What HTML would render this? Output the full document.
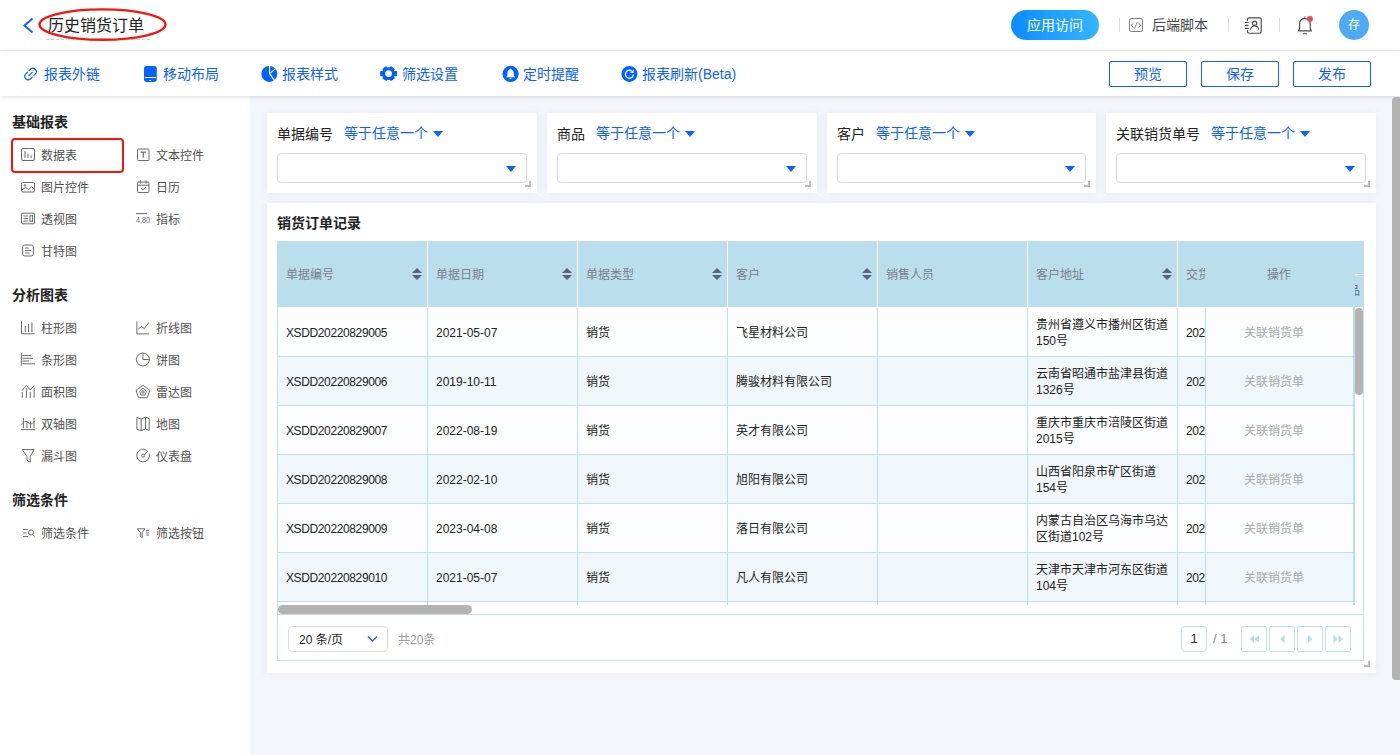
<!DOCTYPE html>
<html lang="zh-CN">
<head>
<meta charset="utf-8">
<title>历史销货订单</title>
<style>
*{box-sizing:border-box;margin:0;padding:0}
html,body{width:1400px;height:755px;overflow:hidden}
body{font-family:"Liberation Sans","Noto Sans CJK SC",sans-serif;font-size:13px;color:#333;background:#f5f6fa;position:relative}
.abs{position:absolute}
/* header */
#hdr{position:absolute;left:0;top:0;width:1400px;height:51px;background:#fff;border-bottom:1px solid #ebebeb}
#title{position:absolute;left:48px;top:15px;font-size:16px;line-height:22px;color:#222;white-space:nowrap}
#dash{position:absolute;left:46px;top:39px;width:104px;border-top:1px dashed #d0d0d0}
#pill{position:absolute;left:1011px;top:10px;width:88px;height:30px;border-radius:15px;background:linear-gradient(90deg,#0d8cff,#34b6ff);color:#fff;font-size:14px;line-height:30px;text-align:center}
.vsep{position:absolute;top:18px;width:1px;height:14px;background:#ddd}
#script{position:absolute;left:1152px;top:14px;font-size:14px;line-height:22px;color:#444}
#avatar{position:absolute;left:1339px;top:10px;width:30px;height:30px;border-radius:50%;background:#4eabf3;color:#fff;font-size:12px;line-height:30px;text-align:center}
/* toolbar */
#tb{z-index:5;position:absolute;left:0;top:51px;width:1400px;height:45px;background:#fff;box-shadow:0 1px 5px rgba(0,0,0,.13)}
.ti{position:absolute;top:12px;font-size:14px;line-height:22px;color:#0b62ff;white-space:nowrap}
.ti svg{position:absolute;top:3px}
.btn{position:absolute;top:10px;width:78px;height:26px;border:1px solid #0b62ff;border-radius:2px;color:#0b62ff;font-size:14px;line-height:24px;text-align:center;background:#fff}
/* sidebar */
#side{position:absolute;left:0;top:96px;width:250px;height:659px;background:#fff;border-top:1px solid #fff}
.sh{position:absolute;left:12px;font-size:14px;font-weight:bold;color:#222;line-height:20px}
.si{position:absolute;font-size:12px;line-height:18px;color:#505050;white-space:nowrap}
.si svg{position:absolute;left:-20px;top:2px}
#selbox{position:absolute;left:11px;top:41px;width:113px;height:35px;border:2px solid #f5150f;border-radius:4px}
/* filter cards */
.fc{position:absolute;top:113px;height:80px;background:#fff;box-shadow:0 0 8px rgba(110,110,190,.10)}
.fl{position:absolute;left:10px;top:11px;font-size:14px;line-height:20px;color:#222;white-space:nowrap}
.fl b{font-weight:normal;color:#0b62ff;margin-left:11px;position:relative;top:-1px}
.fi{position:absolute;left:10px;top:40px;height:30px;border:1px solid #d9d9d9;border-radius:4px;background:#fff}
.caret{position:absolute;width:0;height:0;border-left:5px solid transparent;border-right:5px solid transparent;border-top:6px solid #0b62ff}
.rz{position:absolute;width:6px;height:6px;border-right:2px solid #bbb;border-bottom:2px solid #bbb}
/* table card */
#card{position:absolute;left:267px;top:203px;width:1109px;height:470px;background:#fff;box-shadow:0 0 8px rgba(110,110,190,.10)}
#ctitle{position:absolute;left:10px;top:10px;font-size:14px;font-weight:bold;color:#222;line-height:20px}

/* table */
#tbl{position:absolute;left:10px;top:38px;width:1087px;height:420px;border:1px solid #c3dfeb;border-top:none;overflow:hidden;font-size:12px;background:#fbfdfe}
#th{position:absolute;left:0;top:0;width:1087px;height:66px;background:#badeeb}
.hc{position:absolute;top:0;height:66px;border-right:1px solid #fff;color:#7b808c;line-height:68px;padding-left:8px;white-space:nowrap;overflow:hidden}
.sort{position:absolute;right:5px;top:27px;width:10px;height:12px}
.sort:before,.sort:after{content:"";position:absolute;left:0;border-left:5px solid transparent;border-right:5px solid transparent}
.sort:before{top:0;border-bottom:5px solid #5a6379}
.sort:after{bottom:0;border-top:5px solid #5a6379}
.row{position:absolute;left:0;width:1077px;height:49px;border-bottom:1px solid #c3dfeb;background:#fbfdfe}
.row.e{background:#f0f7fb}
.c{position:absolute;top:0;height:49px;border-right:1px solid #c3dfeb;padding-left:8px;color:#222;white-space:nowrap;overflow:hidden;display:flex;align-items:center;line-height:16px}
.c.n{letter-spacing:-0.38px}
.op{position:absolute;left:927px;top:0;width:148px;height:48px;padding-right:11px;border-left:1px solid #c3dfeb;background:inherit;color:#aaa;text-align:center;line-height:50px}

/* pagination */
#pg{position:absolute;left:0;top:373px;width:1087px;height:47px;border-top:1px solid #c3dfeb;background:#fff;font-size:12px}
#psel{position:absolute;left:10px;top:11px;width:100px;height:26px;border:1px solid #dcdcdc;border-radius:4px;line-height:26px;padding-left:10px;color:#222}
#ptot{position:absolute;left:120px;top:12px;line-height:26px;color:#999}
#pin{position:absolute;left:903px;top:11px;width:26px;height:26px;border:1px solid #c3dfeb;border-radius:4px;line-height:24px;text-align:center;color:#333;font-size:13px}
#pof{position:absolute;left:935px;top:11px;line-height:26px;color:#888;font-size:13px}
.pb{position:absolute;top:11px;width:26px;height:26px;border:1px solid #c3dfeb;border-radius:2px}
.pb svg{position:absolute;left:0;top:0}
</style>
</head>
<body>
<div id="hdr">
  <svg class="abs" style="left:20px;top:15px" width="16" height="20" viewBox="0 0 16 20"><path d="M12.5 3.5 L4.5 10.5 L12.5 17.5" fill="none" stroke="#0b62ff" stroke-width="2"/></svg>
  <div id="title">历史销货订单</div>
  <div id="dash"></div>
  <svg class="abs" style="left:36px;top:6px" width="134" height="38" viewBox="0 0 134 38"><ellipse cx="66.5" cy="18.6" rx="63" ry="15.2" fill="none" stroke="#f5150f" stroke-width="2.4"/></svg>
  <div id="pill">应用访问</div>
  <div class="vsep" style="left:1119px"></div>
  <div id="script">后端脚本</div>
  <div class="vsep" style="left:1228px"></div>
  <div class="vsep" style="left:1279px"></div>

  <svg class="abs" style="left:1127px;top:16px" width="18" height="18" viewBox="1127 16 18 18"><rect x="1129.5" y="18.5" width="13" height="13" rx="2" fill="none" stroke="#7d7d7d" stroke-width="1"/><path d="M1133.5,23.1 L1130.9,25.3 L1133.5,27.5 M1137.3,22 L1134.5,28.5 M1138.4,23.1 L1141,25.3 L1138.4,27.5" fill="none" stroke="#7d7d7d" stroke-width="0.9"/></svg>
  <svg class="abs" style="left:1243px;top:15px" width="21" height="21" viewBox="1243 15 21 21"><g fill="none" stroke="#4a4a4a" stroke-width="1.15"><path d="M1247.5,21 V19.4 a1.6,1.6 0 0 1 1.6,-1.6 H1259.6 a1.6,1.6 0 0 1 1.6,1.6 V31.6 a1.6,1.6 0 0 1 -1.6,1.6 H1249.1 a1.6,1.6 0 0 1 -1.6,-1.6 V30"/><path d="M1245,22.5 H1248.6 M1245,25.4 H1248.6 M1245,28.4 H1248.6" stroke-width="1.1"/><circle cx="1254.6" cy="23.2" r="2.1"/><path d="M1250.6,29.7 a4,3.8 0 0 1 8,0"/></g></svg>
  <svg class="abs" style="left:1296px;top:14px" width="20" height="22" viewBox="1296 14 20 22"><g fill="none" stroke="#4a4a4a" stroke-width="1.15" stroke-linecap="round"><path d="M1298.4,30.8 H1311.4 L1310.2,29 V24 C1310.2,20.6 1308,18.6 1304.9,18.6 C1301.8,18.6 1299.6,20.6 1299.6,24 V29 Z" stroke-linejoin="round"/><path d="M1304.9,16.9 V17.2"/><path d="M1303.3,33.7 H1306.6"/></g><circle cx="1310" cy="18.9" r="2.9" fill="#e94b4b"/></svg>
  <div id="avatar">存</div>
</div>
<div id="tb">
  <svg class="abs" style="left:22px;top:14px" width="18" height="18" viewBox="22 65 18 18"><g transform="translate(30.5,74) rotate(-45)" fill="none" stroke="#0062ff" stroke-width="1.15" stroke-linecap="round"><path d="M-0.9,-3.4 H-3.3 A3.4,3.4 0 0 0 -3.3,3.4 H-0.9"/><path d="M1.4,-3.4 H3.3 A3.4,3.4 0 0 1 3.3,3.4 H1.4"/><path d="M-2.5,0 H2.7"/></g></svg>
  <svg class="abs" style="left:142px;top:14px" width="18" height="18" viewBox="142 65 18 18"><rect x="144" y="66" width="12.8" height="16" rx="2.4" fill="#0062ff"/><rect x="144.6" y="77" width="11.6" height="1" fill="#fff"/><rect x="149.2" y="80" width="2" height="1" rx="0.5" fill="#fff"/></svg>
  <svg class="abs" style="left:260px;top:14px" width="18" height="18" viewBox="260 65 18 18"><circle cx="269.3" cy="73.9" r="8" fill="#0062ff"/><path d="M269.6,65.5 V73.6 L275.6,68.6 M269.6,73.6 L274.6,80.6" fill="none" stroke="#fff" stroke-width="1.1"/></svg>
  <svg class="abs" style="left:379px;top:14px" width="20" height="18" viewBox="379 65 20 18"><g transform="translate(388.6,73.6)" fill="#0062ff"><circle r="6.3"/><rect x="-8.5" y="-2.6" width="17" height="5.2" rx="1"/><rect x="-7.5" y="-2.6" width="15" height="5.2" rx="1" transform="rotate(54)"/><rect x="-7.5" y="-2.6" width="15" height="5.2" rx="1" transform="rotate(126)"/><circle r="3.4" fill="#fff"/></g></svg>
  <svg class="abs" style="left:501px;top:14px" width="19" height="18" viewBox="501 65 19 18"><circle cx="510.6" cy="73.9" r="8.1" fill="#0062ff"/><path d="M510.5,68.4 L508.6,70.3 C507.7,71.2 507.4,72 507.4,73.2 V75.6 L506,77.3 H515 L513.7,75.6 V73.2 C513.7,72 513.4,71.2 512.4,70.3 Z" fill="#fff"/><rect x="509.5" y="78" width="2" height="0.9" fill="#fff"/></svg>
  <svg class="abs" style="left:620px;top:14px" width="19" height="18" viewBox="620 65 19 18"><circle cx="629.4" cy="73.9" r="8" fill="#0062ff"/><path d="M633.4,74.6 A4,4 0 1 1 631.6,70.9" fill="none" stroke="#fff" stroke-width="1.3"/><path d="M630.2,72.7 L633.7,69.4 V72.9 Z" fill="#fff"/></svg>
  <div class="ti" style="left:44px">报表外链</div>
  <div class="ti" style="left:163px">移动布局</div>
  <div class="ti" style="left:282px">报表样式</div>
  <div class="ti" style="left:402px">筛选设置</div>
  <div class="ti" style="left:523px">定时提醒</div>
  <div class="ti" style="left:642px">报表刷新(Beta)</div>
  <div class="btn" style="left:1109px">预览</div>
  <div class="btn" style="left:1201px">保存</div>
  <div class="btn" style="left:1293px">发布</div>
</div>

<div id="side">
  <svg class="abs" style="left:20px;top:49px" width="17" height="17" viewBox="20 146 17 17"><g fill="none" stroke="#6b6b6b" stroke-width="1"><rect x="21.5" y="148.5" width="13" height="12" rx="1.5"/><path d="M25,151.2 V158 M28,153.6 V158 M31,155.4 V158"/></g></svg>
  <svg class="abs" style="left:20px;top:83px" width="17" height="14" viewBox="20 180 17 14"><g fill="none" stroke="#6b6b6b" stroke-width="1"><rect x="21.5" y="182.5" width="13" height="9.5" rx="1.2"/><circle cx="24.8" cy="185.4" r="0.8"/><path d="M21.8,190 L25.5,187.6 L28.6,189.6 L31.6,186.6 L34.4,189"/></g></svg>
  <svg class="abs" style="left:20px;top:114px" width="17" height="15" viewBox="20 211 17 15"><g fill="none" stroke="#6b6b6b" stroke-width="1"><rect x="21.5" y="213.2" width="13" height="10.6" rx="0.6"/><path d="M23.6,216 H28.2 M23.6,218.5 H28.2 M23.6,221 H28.2"/><rect x="30" y="215.8" width="2.6" height="5.4"/></g></svg>
  <svg class="abs" style="left:20px;top:146px" width="17" height="15" viewBox="20 243 17 15"><g fill="none" stroke="#6b6b6b" stroke-width="1"><rect x="22.6" y="245" width="10.8" height="11" rx="2.2"/><path d="M25.2,248 H28.6 M25.2,250.5 H31 M25.2,253 H29.6"/></g></svg>
  <svg class="abs" style="left:135px;top:49px" width="17" height="17" viewBox="135 146 17 17"><g fill="none" stroke="#6b6b6b" stroke-width="1"><rect x="137.5" y="149" width="11.5" height="11.5" rx="0.8"/><path d="M140.5,152.2 H146 M143.25,152.2 V157.6" stroke-width="1.2"/></g></svg>
  <svg class="abs" style="left:135px;top:81px" width="17" height="17" viewBox="135 178 17 17"><g fill="none" stroke="#6b6b6b" stroke-width="1"><rect x="137.5" y="182" width="11.5" height="10.5" rx="1.2"/><path d="M140.5,180.3 V183.6 M146,180.3 V183.6 M137.5,185.2 H149 M141,188.3 L142.8,190 L146,186.8"/></g></svg>
  <svg class="abs" style="left:20px;top:222px" width="17" height="17" viewBox="20 319 17 17"><g fill="none" stroke="#6b6b6b" stroke-width="1"><path d="M21.5,321.2 V333.8 H34.6"/><path d="M25.3,326 V332.2 M28.5,324 V332.2 M31.9,322.4 V332.2"/></g></svg>
  <svg class="abs" style="left:20px;top:254px" width="17" height="17" viewBox="20 351 17 17"><g fill="none" stroke="#6b6b6b" stroke-width="1"><path d="M21.3,353 V365.6"/><path d="M22.5,355.4 H31 M22.5,358.3 H33 M22.5,361 H29 M22.5,363.8 H35"/></g></svg>
  <svg class="abs" style="left:20px;top:286px" width="17" height="17" viewBox="20 383 17 17"><g fill="none" stroke="#6b6b6b" stroke-width="1"><path d="M22,390.6 L26.4,385.4 L30.3,390 L34.2,385.4"/><path d="M22.3,392 V397.8 M26.4,388.2 V397.8 M30.3,392 V397.8 M34.1,388.2 V397.8"/></g></svg>
  <svg class="abs" style="left:20px;top:318px" width="17" height="17" viewBox="20 415 17 17"><g fill="none" stroke="#6b6b6b" stroke-width="1"><path d="M21,429.6 H35.2"/><path d="M23.4,418 V428 M27,421.5 V428 M30.6,421.5 V428 M34,418 V428"/><path d="M21.6,424.6 C24,420.6 26.5,420.6 28.8,423 C30.6,424.8 32.5,423.6 34.8,421"/></g></svg>
  <svg class="abs" style="left:20px;top:350px" width="17" height="17" viewBox="20 447 17 17"><g fill="none" stroke="#6b6b6b" stroke-width="1"><path d="M22.3,449.6 H34.2 L30.2,456.6 V462.2 L27,460.2 V456.6 Z" stroke-linejoin="round"/></g></svg>
  <svg class="abs" style="left:135px;top:222px" width="17" height="17" viewBox="135 319 17 17"><g fill="none" stroke="#6b6b6b" stroke-width="1"><path d="M136.9,321.4 V333.9 H149.2"/><path d="M138.2,329.2 L141.3,326.5 L144.3,328.6 L148.9,322.4"/></g></svg>
  <svg class="abs" style="left:135px;top:254px" width="17" height="17" viewBox="135 351 17 17"><g fill="none" stroke="#6b6b6b" stroke-width="1"><path d="M142.9,353 V359.5 H149.4 A6.5,6.5 0 1 1 142.9,353 A6.5,6.5 0 0 1 149.4,359.5"/></g></svg>
  <svg class="abs" style="left:135px;top:286px" width="17" height="17" viewBox="135 383 17 17"><g fill="none" stroke="#6b6b6b" stroke-width="1"><path d="M142.9,385.2 L149.7,390.2 L147.4,397.7 H138.4 L136.1,390.2 Z" stroke-linejoin="round"/><path d="M142.9,388 L146.2,391.3 L144.9,395 H140.9 L139.6,391.3 Z" stroke-linejoin="round"/><circle cx="142.9" cy="392" r="1.1"/></g></svg>
  <svg class="abs" style="left:135px;top:318px" width="17" height="17" viewBox="135 415 17 17"><g fill="none" stroke="#6b6b6b" stroke-width="1"><path d="M136.9,417.6 L141.1,419 L145.5,417.2 L149.2,418.4 V430.4 L145.5,429 L141.1,430.6 L136.9,429.4 Z M141.1,419 V430.6 M145.5,417.2 V429" stroke-linejoin="round"/></g></svg>
  <svg class="abs" style="left:135px;top:350px" width="17" height="17" viewBox="135 447 17 17"><g fill="none" stroke="#6b6b6b" stroke-width="1"><path d="M147.2,450.6 A6.4,6.4 0 1 0 149.2,453.6"/><circle cx="143.1" cy="455.7" r="1.5"/><path d="M144.2,454.6 L148.2,450.8"/></g></svg>
  <svg class="abs" style="left:20px;top:429px" width="17" height="14" viewBox="20 526 17 14"><g fill="none" stroke="#6b6b6b" stroke-width="1"><path d="M23,529.4 H28 M23,533 H26.6 M23,536.6 H28"/><circle cx="31" cy="532.4" r="2.5"/><path d="M32.8,534.4 L34.4,536.4"/></g></svg>
  <svg class="abs" style="left:135px;top:429px" width="17" height="14" viewBox="135 526 17 14"><g fill="none" stroke="#6b6b6b" stroke-width="1"><path d="M137.4,528.8 H145 L142.2,532.6 V537.6 L140.4,536.4 V532.6 Z" stroke-linejoin="round"/><path d="M146,530.6 H149.2 M146,532.8 H149.2 M146,535 H149.2"/></g></svg>
  <svg class="abs" style="left:135px;top:114px" width="17" height="15" viewBox="135 211 17 15"><path d="M136,213.6 H147" fill="none" stroke="#6b6b6b" stroke-width="1"/><text x="136" y="223" font-family="Liberation Sans, sans-serif" font-size="9" fill="#6b6b6b" textLength="14" lengthAdjust="spacingAndGlyphs">4,80</text></svg>
  <div class="sh" style="top:15px">基础报表</div>
  <div id="selbox"></div>
  <div class="si" style="left:41px;top:50px">数据表</div>
  <div class="si" style="left:156px;top:50px">文本控件</div>
  <div class="si" style="left:41px;top:82px">图片控件</div>
  <div class="si" style="left:156px;top:82px">日历</div>
  <div class="si" style="left:41px;top:114px">透视图</div>
  <div class="si" style="left:156px;top:114px">指标</div>
  <div class="si" style="left:41px;top:146px">甘特图</div>
  <div class="sh" style="top:188px">分析图表</div>
  <div class="si" style="left:41px;top:223px">柱形图</div>
  <div class="si" style="left:156px;top:223px">折线图</div>
  <div class="si" style="left:41px;top:255px">条形图</div>
  <div class="si" style="left:156px;top:255px">饼图</div>
  <div class="si" style="left:41px;top:287px">面积图</div>
  <div class="si" style="left:156px;top:287px">雷达图</div>
  <div class="si" style="left:41px;top:319px">双轴图</div>
  <div class="si" style="left:156px;top:319px">地图</div>
  <div class="si" style="left:41px;top:351px">漏斗图</div>
  <div class="si" style="left:156px;top:351px">仪表盘</div>
  <div class="sh" style="top:393px">筛选条件</div>
  <div class="si" style="left:41px;top:428px">筛选条件</div>
  <div class="si" style="left:156px;top:428px">筛选按钮</div>
</div>
<div id="main">
<div class="fc" style="left:267px;width:270px">
  <div class="fl">单据编号<b>等于任意一个</b><i class="caret" style="position:relative;display:inline-block;margin-left:5px;top:-2px"></i></div>
  <div class="fi" style="width:250px"><i class="caret" style="right:10px;top:12px"></i></div>
  <i class="rz" style="right:6px;bottom:6px"></i>
</div>
<div class="fc" style="left:547px;width:270px">
  <div class="fl">商品<b>等于任意一个</b><i class="caret" style="position:relative;display:inline-block;margin-left:5px;top:-2px"></i></div>
  <div class="fi" style="width:250px"><i class="caret" style="right:10px;top:12px"></i></div>
  <i class="rz" style="right:6px;bottom:6px"></i>
</div>
<div class="fc" style="left:827px;width:269px">
  <div class="fl">客户<b>等于任意一个</b><i class="caret" style="position:relative;display:inline-block;margin-left:5px;top:-2px"></i></div>
  <div class="fi" style="width:249px"><i class="caret" style="right:10px;top:12px"></i></div>
  <i class="rz" style="right:6px;bottom:6px"></i>
</div>
<div class="fc" style="left:1106px;width:270px">
  <div class="fl">关联销货单号<b>等于任意一个</b><i class="caret" style="position:relative;display:inline-block;margin-left:5px;top:-2px"></i></div>
  <div class="fi" style="width:250px"><i class="caret" style="right:10px;top:12px"></i></div>
  <i class="rz" style="right:6px;bottom:6px"></i>
</div>
<div id="card">
  <div id="ctitle">销货订单记录</div>
  <i class="rz" style="right:6px;bottom:6px"></i>
  <div id="tbl">
<div id="th">
  <div class="hc" style="left:0px;width:150px">单据编号<i class="sort"></i></div>
  <div class="hc" style="left:150px;width:150px">单据日期<i class="sort"></i></div>
  <div class="hc" style="left:300px;width:150px">单据类型<i class="sort"></i></div>
  <div class="hc" style="left:450px;width:150px">客户<i class="sort"></i></div>
  <div class="hc" style="left:600px;width:150px">销售人员</div>
  <div class="hc" style="left:750px;width:150px">客户地址<i class="sort"></i></div>
  <div class="hc" style="left:900px;width:27px;border-right:none">交货日期</div>
  <div class="hc" style="left:927px;width:148px;padding-left:0;text-align:center;border-right:none">操作</div>
</div>
<div class="row" style="top:67px"><div class="c n" style="left:0;width:150px">XSDD20220829005</div><div class="c" style="left:150px;width:150px">2021-05-07</div><div class="c" style="left:300px;width:150px">销货</div><div class="c" style="left:450px;width:150px">飞星材料公司</div><div class="c" style="left:600px;width:150px"></div><div class="c" style="left:750px;width:150px"><span>贵州省遵义市播州区街道<br>150号</span></div><div class="c n" style="left:900px;width:27px;border-right:none">2022</div><div class="op">关联销货单</div></div>
<div class="row e" style="top:116px"><div class="c n" style="left:0;width:150px">XSDD20220829006</div><div class="c" style="left:150px;width:150px">2019-10-11</div><div class="c" style="left:300px;width:150px">销货</div><div class="c" style="left:450px;width:150px">腾骏材料有限公司</div><div class="c" style="left:600px;width:150px"></div><div class="c" style="left:750px;width:150px"><span>云南省昭通市盐津县街道<br>1326号</span></div><div class="c n" style="left:900px;width:27px;border-right:none">2022</div><div class="op">关联销货单</div></div>
<div class="row" style="top:165px"><div class="c n" style="left:0;width:150px">XSDD20220829007</div><div class="c" style="left:150px;width:150px">2022-08-19</div><div class="c" style="left:300px;width:150px">销货</div><div class="c" style="left:450px;width:150px">英才有限公司</div><div class="c" style="left:600px;width:150px"></div><div class="c" style="left:750px;width:150px"><span>重庆市重庆市涪陵区街道<br>2015号</span></div><div class="c n" style="left:900px;width:27px;border-right:none">2022</div><div class="op">关联销货单</div></div>
<div class="row e" style="top:214px"><div class="c n" style="left:0;width:150px">XSDD20220829008</div><div class="c" style="left:150px;width:150px">2022-02-10</div><div class="c" style="left:300px;width:150px">销货</div><div class="c" style="left:450px;width:150px">旭阳有限公司</div><div class="c" style="left:600px;width:150px"></div><div class="c" style="left:750px;width:150px"><span>山西省阳泉市矿区街道<br>154号</span></div><div class="c n" style="left:900px;width:27px;border-right:none">2022</div><div class="op">关联销货单</div></div>
<div class="row" style="top:263px"><div class="c n" style="left:0;width:150px">XSDD20220829009</div><div class="c" style="left:150px;width:150px">2023-04-08</div><div class="c" style="left:300px;width:150px">销货</div><div class="c" style="left:450px;width:150px">落日有限公司</div><div class="c" style="left:600px;width:150px"></div><div class="c" style="left:750px;width:150px"><span>内蒙古自治区乌海市乌达<br>区街道102号</span></div><div class="c n" style="left:900px;width:27px;border-right:none">2022</div><div class="op">关联销货单</div></div>
<div class="row e" style="top:312px"><div class="c n" style="left:0;width:150px">XSDD20220829010</div><div class="c" style="left:150px;width:150px">2021-05-07</div><div class="c" style="left:300px;width:150px">销货</div><div class="c" style="left:450px;width:150px">凡人有限公司</div><div class="c" style="left:600px;width:150px"></div><div class="c" style="left:750px;width:150px"><span>天津市天津市河东区街道<br>104号</span></div><div class="c n" style="left:900px;width:27px;border-right:none">2022</div><div class="op">关联销货单</div></div>
<div class="row" style="top:361px"><div class="c" style="left:0;width:150px"></div><div class="c" style="left:150px;width:150px"></div><div class="c" style="left:300px;width:150px"></div><div class="c" style="left:450px;width:150px"></div><div class="c" style="left:600px;width:150px"></div><div class="c" style="left:750px;width:150px"></div><div class="op"></div></div>
<div class="abs" style="left:1075px;top:66px;width:11px;height:298px;background:#fff;border-left:2px solid #badeeb"></div>
<div class="abs" style="left:1077px;top:33px;width:9px;height:1px;background:#fff"></div>
<div class="abs" style="left:1077px;top:42px;width:5px;height:16px;overflow:hidden;color:#5f6675;line-height:16px"><span style="position:absolute;left:-7px;top:0">品</span></div>
<div class="abs" style="left:1077px;top:67px;width:8px;height:87px;border-radius:4px;background:#b3b3b3"></div>
<div class="abs" style="left:0;top:364px;width:1087px;height:10px;background:#fff"></div>
<div class="abs" style="left:0px;top:364px;width:194px;height:9px;border-radius:5px;background:#b3b3b3"></div>
<div id="pg">
  <div id="psel">20 条/页<svg class="abs" style="right:9px;top:8px" width="11" height="8" viewBox="0 0 11 8"><path d="M1 1.5 L5.5 6 L10 1.5" fill="none" stroke="#2b5cf0" stroke-width="1.4"/></svg></div>
  <div id="ptot">共20条</div>
  <div id="pin">1</div>
  <div id="pof">/ 1</div>
  <div class="pb" style="left:963px"><svg width="24" height="24" viewBox="0 0 24 24"><path d="M12 8 L12 16 L7.5 12 Z M17 8 L17 16 L12.5 12 Z" fill="#b9dcea"/></svg></div>
  <div class="pb" style="left:991px"><svg width="24" height="24" viewBox="0 0 24 24"><path d="M14.5 8 L14.5 16 L10 12 Z" fill="#b9dcea"/></svg></div>
  <div class="pb" style="left:1019px"><svg width="24" height="24" viewBox="0 0 24 24"><path d="M10 8 L10 16 L14.5 12 Z" fill="#b9dcea"/></svg></div>
  <div class="pb" style="left:1047px"><svg width="24" height="24" viewBox="0 0 24 24"><path d="M7.5 8 L7.5 16 L12 12 Z M12.5 8 L12.5 16 L17 12 Z" fill="#b9dcea"/></svg></div>
</div>
</div>
</div>
</div>
<div class="abs" style="left:1392px;top:97px;width:8px;height:583px;border-radius:4px 0 0 4px;background:#b3b3b3;z-index:6"></div>
</body>
</html>
